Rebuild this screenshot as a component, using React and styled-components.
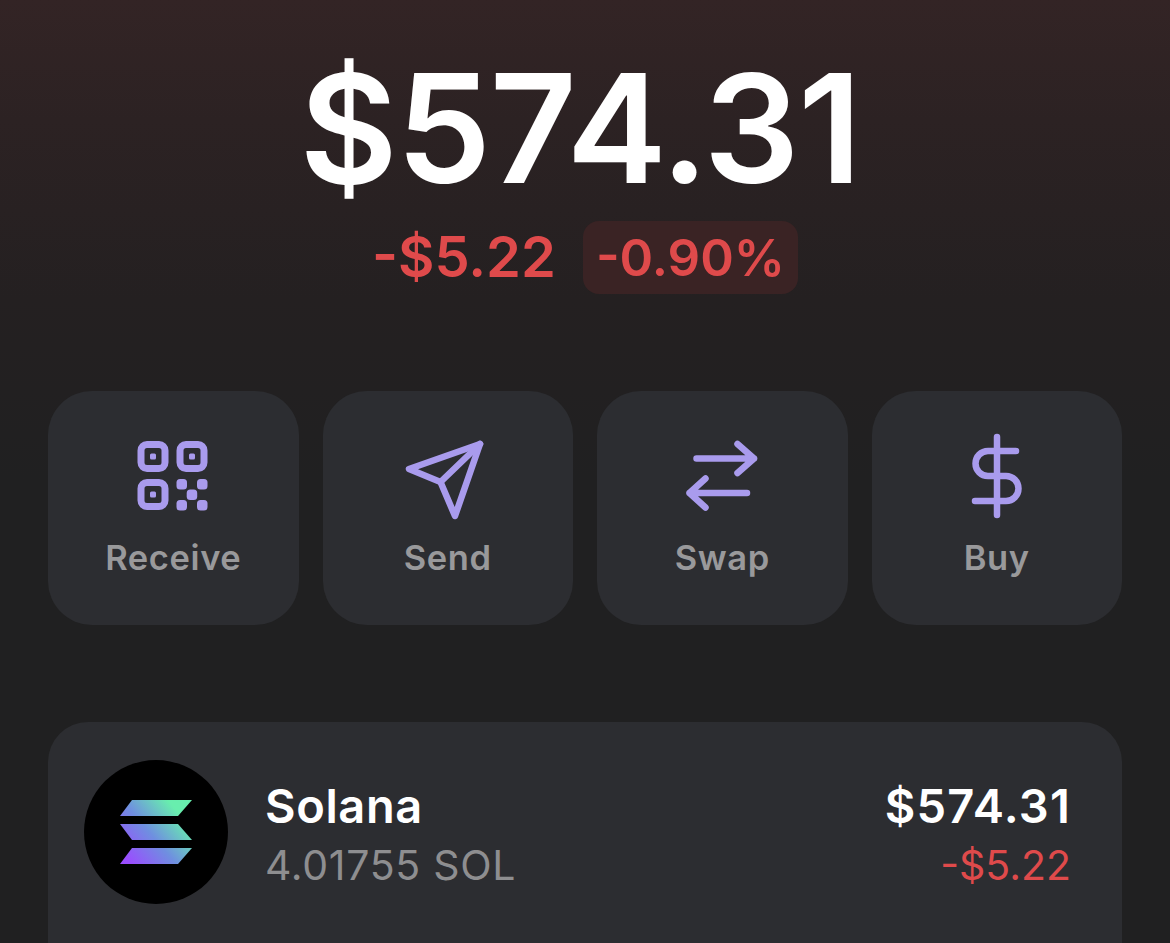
import styled, { createGlobalStyle } from "styled-components";

const GlobalStyle = createGlobalStyle`
  html, body {
    margin: 0;
    padding: 0;
    background: #202021;
  }
`;

const Screen = styled.div`
  width: 1170px;
  height: 943px;
  overflow: hidden;
  box-sizing: border-box;
  padding: 0 48px;
  font-family: Inter, "Liberation Sans", sans-serif;
  background: linear-gradient(180deg, #332425 0%, #2c2223 120px, #242021 300px, #202021 480px);
`;

const Balance = styled.div`
  padding-top: 40px;
  padding-right: 10px;
  height: 177px;
  text-align: center;
  color: #ffffff;
  font-size: 151px;
  font-weight: 600;
  line-height: 177px;
  letter-spacing: -1.5px;
`;

const ChangeRow = styled.div`
  display: flex;
  justify-content: center;
  align-items: center;
  gap: 27px;
  margin-top: 4px;
  color: #df4a4b;
  font-size: 56px;
  font-weight: 600;
  line-height: 73px;
`;

const PercentPill = styled.span`
  padding: 0 13px;
  border-radius: 16px;
  background: #3a2324;
  font-size: 51px;
`;

const Actions = styled.div`
  display: grid;
  grid-template-columns: repeat(4, 1fr);
  gap: 24px;
  margin-top: 97px;
`;

const ActionCard = styled.div`
  height: 234px;
  box-sizing: border-box;
  padding-top: 43px;
  display: flex;
  flex-direction: column;
  align-items: center;
  border-radius: 44px;
  background: #2c2d31;
`;

const ActionIcon = styled.svg`
  width: 84px;
  height: 88px;
  overflow: visible;
  fill: none;
  stroke: #a99bed;
  stroke-width: 6.5;
  stroke-linecap: round;
  stroke-linejoin: round;
`;

const ActionLabel = styled.span`
  margin-top: 14px;
  color: #99999b;
  font-size: 34.5px;
  font-weight: 600;
  letter-spacing: 0.6px;
  line-height: 44px;
`;

const TokenCard = styled.div`
  margin-top: 97px;
  height: 260px;
  box-sizing: border-box;
  padding: 38px 51px 0 36px;
  display: flex;
  align-items: flex-start;
  gap: 37px;
  border-radius: 40px;
  background: #2c2d31;
`;

const TokenLogo = styled.svg`
  width: 144px;
  height: 144px;
  flex: none;
`;

const TokenText = styled.div`
  flex: 1;
  display: flex;
  flex-direction: column;
  gap: 5px;
  padding-top: 19px;
  align-items: ${(p) => (p.$right ? "flex-end" : "flex-start")};
`;

const PrimaryText = styled.span`
  color: #ffffff;
  font-size: 47px;
  font-weight: 600;
  letter-spacing: ${(p) => p.$spacing || "0.6px"};
  line-height: 54px;
`;

const SecondaryText = styled.span`
  color: ${(p) => p.$color || "#8e8e90"};
  font-size: 41px;
  font-weight: 400;
  letter-spacing: ${(p) => p.$spacing || "0.7px"};
  line-height: 54px;
`;

function QrIcon() {
  const squares = [
    [6.5, 7],
    [45.5, 7],
    [6.5, 45],
  ];
  const dots = [
    [45.5, 45],
    [66, 45],
    [55.7, 55.5],
    [45.5, 66],
    [66, 66],
  ];
  return (
    <ActionIcon viewBox="0 0 84 88">
      {squares.map(([x, y]) => (
        <g key={`${x}-${y}`}>
          <rect x={x + 3.5} y={y + 3.5} width="24" height="24" rx="6" strokeWidth="7" />
          <rect x={x + 12.5} y={y + 12.5} width="6" height="6" rx="1.5" fill="#a99bed" stroke="none" />
        </g>
      ))}
      {dots.map(([x, y]) => (
        <rect key={`${x}-${y}`} x={x} y={y} width="10.5" height="10.5" rx="3.5" fill="#a99bed" stroke="none" />
      ))}
    </ActionIcon>
  );
}

function SendIcon() {
  return (
    <ActionIcon viewBox="0 0 84 88">
      <path d="M74 10 L3 35 L34.5 48 L49 82 Z" />
      <path d="M74 10 L34.5 48" />
    </ActionIcon>
  );
}

function SwapIcon() {
  return (
    <ActionIcon viewBox="0 0 84 88">
      <path d="M16.5 24.5 H74 M57.5 10 L74 24.5 L57.5 39" />
      <path d="M67 59 H9.5 M25.5 44.5 L9.5 59 L25.5 73.5" />
    </ActionIcon>
  );
}

function DollarIcon() {
  return (
    <ActionIcon viewBox="0 0 84 88">
      <path d="M42 3 V81" />
      <path d="M61 17 H33 a12.5 12.5 0 0 0 0 25 H51 a12.5 12.5 0 0 1 0 25 H20" />
    </ActionIcon>
  );
}

function SolanaLogo() {
  return (
    <TokenLogo viewBox="0 0 144 144">
      <defs>
        <linearGradient id="solana" gradientUnits="userSpaceOnUse" x1="40" y1="96" x2="93" y2="51">
          <stop offset="0" stopColor="#9a4dff" />
          <stop offset="0.5" stopColor="#6f8fe0" />
          <stop offset="1" stopColor="#68eeae" />
        </linearGradient>
      </defs>
      <circle cx="72" cy="72" r="72" fill="#000000" />
      <path d="M48 40 H108 L94 56 H36 Z" fill="url(#solana)" />
      <path d="M36 64 H94 L108 80 H48 Z" fill="url(#solana)" />
      <path d="M48 88 H108 L94 104 H36 Z" fill="url(#solana)" />
    </TokenLogo>
  );
}

const actions = [
  { label: "Receive", Icon: QrIcon },
  { label: "Send", Icon: SendIcon },
  { label: "Swap", Icon: SwapIcon },
  { label: "Buy", Icon: DollarIcon },
];

export default function App() {
  return (
    <Screen>
      <GlobalStyle />
      <Balance>$574.31</Balance>
      <ChangeRow>
        <span>-$5.22</span>
        <PercentPill>-0.90%</PercentPill>
      </ChangeRow>
      <Actions>
        {actions.map(({ label, Icon }) => (
          <ActionCard key={label}>
            <Icon />
            <ActionLabel>{label}</ActionLabel>
          </ActionCard>
        ))}
      </Actions>
      <TokenCard>
        <SolanaLogo />
        <TokenText>
          <PrimaryText>Solana</PrimaryText>
          <SecondaryText>4.01755 SOL</SecondaryText>
        </TokenText>
        <TokenText $right>
          <PrimaryText $spacing="1.2px">$574.31</PrimaryText>
          <SecondaryText $color="#df4a4b" $spacing="0">-$5.22</SecondaryText>
        </TokenText>
      </TokenCard>
    </Screen>
  );
}
